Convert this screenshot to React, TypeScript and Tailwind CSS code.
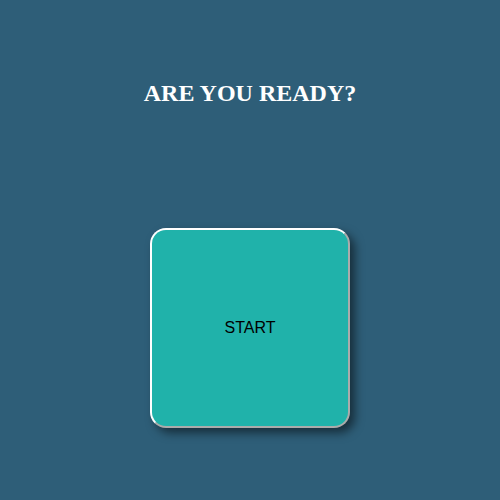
export default function App() {
  return (
    <div className="min-h-[500px] w-full bg-[#2e5e78] flex flex-col items-center pt-[80px]">
      <h2 className="text-white text-[24px] font-bold leading-[27px] font-['Liberation_Serif',serif]">
        ARE YOU READY?
      </h2>
      <button className="mt-[121px] w-[200px] h-[200px] rounded-[16px] bg-[#20b2aa] border-2 border-white [border-style:outset] shadow-[5px_5px_10px_rgba(0,0,0,0.5)] flex items-center justify-center text-black text-[16px] font-['Liberation_Sans',Arial,sans-serif]">
        START
      </button>
    </div>
  );
}
